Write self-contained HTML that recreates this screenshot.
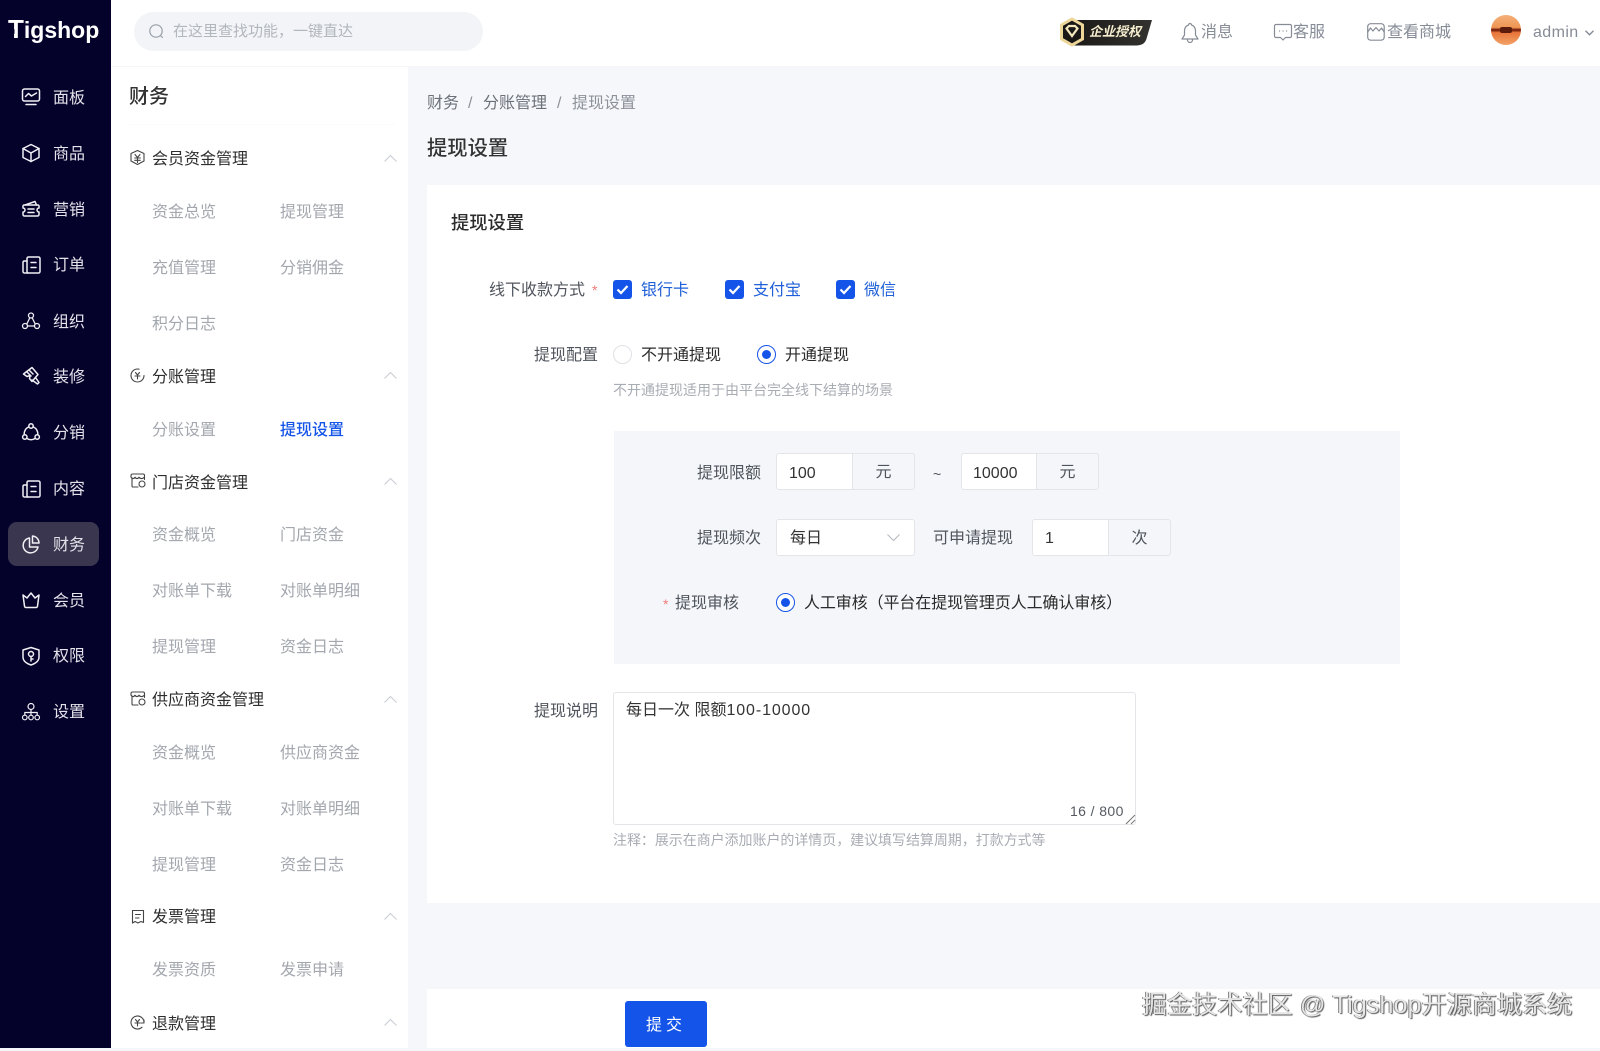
<!DOCTYPE html>
<html lang="zh-CN"><head><meta charset="utf-8"><title>提现设置</title>
<style>
*{box-sizing:border-box}
html,body{margin:0;padding:0;width:1600px;height:1048px;overflow:hidden;background:#f5f7fa;font-family:"Liberation Sans","Noto Sans CJK SC",sans-serif;font-size:16px;color:#333}
.a{position:absolute}
.t{position:absolute;white-space:nowrap;line-height:24px;height:24px;margin-top:1px}
.nav{color:#e4e3ea;left:53px;margin-top:2px}
.h{left:152px;color:#2e2e2e;margin-top:2px}
.i{color:#a3a7ae;margin-top:2px}
.l{color:#50555d}
.b{color:#1f5fd8}
.g{color:#868c96}
svg{position:absolute;overflow:visible;fill:none}
.si{stroke:#f0f0f4;stroke-width:1.5;stroke-linecap:round;stroke-linejoin:round}
.mi{stroke:#444;stroke-width:1.1;stroke-linecap:round;stroke-linejoin:round}
.chev{stroke:#c9ccd2;stroke-width:1}
.tp{stroke:#868c96;stroke-width:1.2;stroke-linecap:round;stroke-linejoin:round}
.cb{position:absolute;width:19px;height:19px;background:#1554e8;border-radius:3px;top:280px}
.rd{position:absolute;width:19px;height:19px;border-radius:50%;background:#fff;border:1px solid #1554e8}
.rd:after{content:"";position:absolute;left:4px;top:4px;width:9px;height:9px;border-radius:50%;background:#1554e8}
.box{position:absolute;background:#fff;border:1px solid #e3e5e9;border-radius:3px}
.add{position:absolute;background:#f4f6fa;border:1px solid #e3e5e9;border-radius:0 3px 3px 0;text-align:center;line-height:37px;color:#50555d}
</style></head><body>

<!-- top bar -->
<div class="a" style="left:0;top:0;width:1600px;height:67px;background:#fff;border-bottom:1px solid #f4f6f9"></div>

<!-- sidebar -->
<div class="a" style="left:0;top:0;width:111px;height:1048px;background:#04012b"></div>
<div class="t" style="left:8px;top:16px;margin:0;font-size:23px;line-height:28px;height:28px;font-weight:700;color:#fff"><span style="font-size:26px;line-height:0">T</span>igshop</div>
<svg style="left:0;top:0" width="111" height="66"><path d="M8 26.500H12L14.500 29.500L14.500 34Z" fill="#04012b"/></svg>
<div class="a" style="left:8px;top:522px;width:91px;height:44px;background:#3a3650;border-radius:9px"></div>

<svg class="si" style="left:21px;top:87px" width="20" height="20"><rect x="1.5" y="2" width="17" height="12" rx="2"/><path d="M4.500 9.500L7.500 6.500L10.500 9L15.500 6M5 17.500H15"/></svg>
<svg class="si" style="left:21px;top:143px" width="20" height="20"><path d="M10 1.500L18 5.500V14.500L10 18.500L2 14.500V5.500Z"/><path d="M2 5.500L10 10L18 5.500M10 10V18.500"/></svg>
<svg class="si" style="left:21px;top:199px" width="20" height="20"><path d="M4 6L14 2.500L15.500 6"/><path d="M3 6H17A1.500 1.500 0 0 1 18 8V9A2 2 0 0 0 18 13V15.500A1.500 1.500 0 0 1 16.500 17H3.500A1.500 1.500 0 0 1 2 15.500V13A2 2 0 0 0 2 9V8A1.500 1.500 0 0 1 3 6Z"/><path d="M7 10H13M7 13.500H13"/></svg>
<svg class="si" style="left:21px;top:255px" width="20" height="20"><rect x="6" y="2" width="13" height="16" rx="1.500"/><path d="M6 6H3A1.500 1.500 0 0 0 2 7.500V16.500A1.500 1.500 0 0 0 3.500 18H7M10 7.500H15M10 12.500H15"/></svg>
<svg class="si" style="left:21px;top:311px;stroke-width:1.3" width="20" height="20"><circle cx="10" cy="4.500" r="2.500"/><circle cx="4" cy="15" r="2.500"/><circle cx="16" cy="15" r="2.500"/><path d="M8.700 7L6 12.600M11.300 7L14 12.600M6.500 15H13.500"/></svg>
<svg class="si" style="left:21px;top:366px" width="20" height="20"><path d="M11 1.500L2.500 8L6 10.500L9 9.500L8.500 12.500L11 15.500L17 8.500Z"/><path d="M5.500 5.500L10 10M8 4L12 8M14.500 11.500L18 16.500L16.500 18L11 14"/></svg>
<svg class="si" style="left:21px;top:422px" width="20" height="20"><path d="M7.500 5A7.500 7.500 0 0 0 3.200 12.500M12.500 5A7.500 7.500 0 0 1 16.800 12.500M6 16.500A7.500 7.500 0 0 0 14 16.500"/><circle cx="10" cy="4" r="2.200"/><circle cx="3.800" cy="15" r="2.200"/><circle cx="16.200" cy="15" r="2.200"/></svg>
<svg class="si" style="left:21px;top:479px" width="20" height="20"><rect x="6" y="2" width="13" height="16" rx="1.500"/><path d="M6 6H3A1.500 1.500 0 0 0 2 7.500V16.500A1.500 1.500 0 0 0 3.500 18H7M10 7.500H15M10 12.500H15"/></svg>
<svg class="si" style="left:21px;top:534px" width="20" height="20"><path d="M8.500 4A7.500 7.500 0 1 0 17 13H8.500Z"/><path d="M11.500 2A7 7 0 0 1 18 9H11.500Z"/></svg>
<svg class="si" style="left:21px;top:590px" width="20" height="20"><path d="M2 5L6 8L10 3L14 8L18 5L16.500 16A1.500 1.500 0 0 1 15 17.500H5A1.500 1.500 0 0 1 3.500 16Z"/></svg>
<svg class="si" style="left:21px;top:646px" width="20" height="20"><path d="M10 1.500L18 4V11C18 15 14.500 17.500 10 19C5.500 17.500 2 15 2 11V4Z"/><circle cx="10" cy="8" r="2.500"/><path d="M10 10.500V15M10 13H12"/></svg>
<svg class="si" style="left:21px;top:702px;stroke-width:1.2" width="20" height="20"><circle cx="10" cy="4.500" r="3"/><circle cx="3.800" cy="15.500" r="2.300"/><circle cx="10" cy="15.500" r="2.300"/><circle cx="16.200" cy="15.500" r="2.300"/><path d="M10 7.500V13M3.800 13V10.500H16.200V13"/></svg>

<div class="t nav" style="top:85px">面板</div>
<div class="t nav" style="top:141px">商品</div>
<div class="t nav" style="top:197px">营销</div>
<div class="t nav" style="top:252px">订单</div>
<div class="t nav" style="top:309px">组织</div>
<div class="t nav" style="top:364px">装修</div>
<div class="t nav" style="top:420px">分销</div>
<div class="t nav" style="top:476px">内容</div>
<div class="t nav" style="top:532px">财务</div>
<div class="t nav" style="top:588px">会员</div>
<div class="t nav" style="top:643px">权限</div>
<div class="t nav" style="top:699px">设置</div>

<!-- submenu panel -->
<div class="a" style="left:111px;top:67px;width:297px;height:981px;background:#fff"></div>
<div class="t" style="left:129px;top:84px;font-size:20px;font-weight:500;color:#333">财务</div>
<div class="a" style="left:129px;top:124px;width:266px;height:1px;background:#fafbfc"></div>

<svg class="mi" style="left:130px;top:150px" width="15" height="15"><path d="M7.500 .5L14 3.500V11L7.500 14.500L1 11V3.500Z"/><path d="M5 4.500L7.500 7.500L10 4.500M4.700 8H10.300M4.700 10.300H10.300M7.500 7.500V12.500"/></svg>
<svg class="mi" style="left:130px;top:368px" width="15" height="15"><circle cx="7.500" cy="7.500" r="6.500" stroke-dasharray="32 9"/><path d="M5.500 4.500L7.500 7L9.500 4.500M5 8H10M7.500 7V11"/></svg>
<svg class="mi" style="left:130px;top:473px" width="16" height="15"><path d="M1 4V2.500A1.500 1.500 0 0 1 2.500 1H13A1.500 1.500 0 0 1 14.500 2.500V6.500M2 5V13A1 1 0 0 0 3 14H8"/><path d="M1 4C2 6 4 6 5 4.200C6 6 8 6 9 4.200C10 6 13 6 14.500 4"/><circle cx="12" cy="11" r="3"/></svg>
<svg class="mi" style="left:130px;top:691px" width="16" height="15"><path d="M1 4V2.500A1.500 1.500 0 0 1 2.500 1H13A1.500 1.500 0 0 1 14.500 2.500V6.500M2 5V13A1 1 0 0 0 3 14H8"/><path d="M1 4C2 6 4 6 5 4.200C6 6 8 6 9 4.200C10 6 13 6 14.500 4"/><circle cx="12" cy="11" r="3"/></svg>
<svg class="mi" style="left:131px;top:909px" width="14" height="15"><path d="M1.500 14V1.500H12.500V13.500L10 12.500L7 14L4 12.500Z"/><path d="M4.500 5.500H9.500M4.500 9H8"/></svg>
<svg class="mi" style="left:130px;top:1015px" width="15" height="15"><path d="M14 7.500A6.500 6.500 0 1 0 12 12.200M14 5V8H11"/><path d="M5.500 4.500L7.500 7L9.500 4.500M5 8H10M7.500 7V11"/></svg>

<div class="t h" style="top:146px">会员资金管理</div>
<div class="t h" style="top:364px">分账管理</div>
<div class="t h" style="top:470px">门店资金管理</div>
<div class="t h" style="top:687px">供应商资金管理</div>
<div class="t h" style="top:904px">发票管理</div>
<div class="t h" style="top:1011px">退款管理</div>

<svg class="chev" style="left:384px;top:155px" width="13" height="7"><path d="M.5 6.500L6.500 .5L12.500 6.500"/></svg>
<svg class="chev" style="left:384px;top:372px" width="13" height="7"><path d="M.5 6.500L6.500 .5L12.500 6.500"/></svg>
<svg class="chev" style="left:384px;top:478px" width="13" height="7"><path d="M.5 6.500L6.500 .5L12.500 6.500"/></svg>
<svg class="chev" style="left:384px;top:696px" width="13" height="7"><path d="M.5 6.500L6.500 .5L12.500 6.500"/></svg>
<svg class="chev" style="left:384px;top:913px" width="13" height="7"><path d="M.5 6.500L6.500 .5L12.500 6.500"/></svg>
<svg class="chev" style="left:384px;top:1019px" width="13" height="7"><path d="M.5 6.500L6.500 .5L12.500 6.500"/></svg>

<div class="t i" style="left:152px;top:199px">资金总览</div><div class="t i" style="left:280px;top:199px">提现管理</div>
<div class="t i" style="left:152px;top:255px">充值管理</div><div class="t i" style="left:280px;top:255px">分销佣金</div>
<div class="t i" style="left:152px;top:311px">积分日志</div>
<div class="t i" style="left:152px;top:417px">分账设置</div><div class="t" style="left:280px;top:417px;margin-top:2px;color:#1554e8;font-weight:500">提现设置</div>
<div class="t i" style="left:152px;top:522px">资金概览</div><div class="t i" style="left:280px;top:522px">门店资金</div>
<div class="t i" style="left:152px;top:578px">对账单下载</div><div class="t i" style="left:280px;top:578px">对账单明细</div>
<div class="t i" style="left:152px;top:634px">提现管理</div><div class="t i" style="left:280px;top:634px">资金日志</div>
<div class="t i" style="left:152px;top:740px">资金概览</div><div class="t i" style="left:280px;top:740px">供应商资金</div>
<div class="t i" style="left:152px;top:796px">对账单下载</div><div class="t i" style="left:280px;top:796px">对账单明细</div>
<div class="t i" style="left:152px;top:852px">提现管理</div><div class="t i" style="left:280px;top:852px">资金日志</div>
<div class="t i" style="left:152px;top:957px">发票资质</div><div class="t i" style="left:280px;top:957px">发票申请</div>

<!-- header contents -->
<div class="a" style="left:134px;top:12px;width:349px;height:39px;border-radius:20px;background:#f2f4f8"></div>
<svg style="left:149px;top:24px;stroke:#9aa0a9;stroke-width:1.2;stroke-linecap:round" width="15" height="15"><circle cx="7" cy="7" r="6.200"/><path d="M11.500 11.500L13.500 13.500"/></svg>
<div class="t" style="left:173px;top:19px;font-size:15px;color:#b2b6bd">在这里查找功能，一键直达</div>

<svg style="left:1060px;top:17px" width="94" height="31"><defs><linearGradient id="bg" x1="0" y1="0" x2="1" y2="0"><stop offset="0" stop-color="#1c1a18"/><stop offset="1" stop-color="#34322f"/></linearGradient></defs><path d="M14 3H92L87 20C85.500 26 83 28.500 75 28.500H14Z" fill="url(#bg)"/><path d="M12 2L22.500 8V22L12 28L1.500 22V8Z" fill="#1a1816" stroke="#ecd699" stroke-width="3"/><path d="M6.500 11.500L9 9H15L17.500 11.500L12 19Z" stroke="#f4e6bd" stroke-width="2.200"/></svg>
<div class="t" style="left:1089px;top:19px;font-size:13px;font-weight:700;font-style:italic;color:#f5edcf">企业授权</div>

<svg class="tp" style="left:1181px;top:22px" width="18" height="21"><path d="M9 1.500A1.500 1.500 0 0 1 10.500 3C13 3.800 14.500 6 14.500 9V13L17 17H1L3.500 13V9C3.500 6 5 3.800 7.500 3A1.500 1.500 0 0 1 9 1.500Z"/><path d="M6.500 18A2.500 2.500 0 0 0 11.500 18"/></svg>
<div class="t g" style="left:1201px;top:20px">消息</div>
<svg class="tp" style="left:1274px;top:23px" width="18" height="18"><path d="M2 1.500H16A1.500 1.500 0 0 1 17.500 3V13A1.500 1.500 0 0 1 16 14.500H11.500L9 17L6.500 14.500H2A1.500 1.500 0 0 1 .5 13V3A1.500 1.500 0 0 1 2 1.500Z"/><path d="M5.500 8H5.600M9 8H9.100M12.500 8H12.600"/></svg>
<div class="t g" style="left:1293px;top:20px">客服</div>
<svg class="tp" style="left:1367px;top:23px" width="18" height="18"><rect x=".7" y=".7" width="16.500" height="16.500" rx="3"/><path d="M.7 9L3.500 5L6 8L9 4.500L12 8L14.500 5L17.200 9"/></svg>
<div class="t g" style="left:1387px;top:20px">查看商城</div>
<div class="a" style="left:1491px;top:15px;width:30px;height:30px;border-radius:50%;background:linear-gradient(#f4b07a 0%,#ef9552 42%,#7c2410 48%,#7c2410 52%,#e8743a 58%,#f2a468 100%)"></div>
<div class="a" style="left:1500px;top:27px;width:12px;height:6px;background:#5a1a0c;border-radius:2px"></div>
<div class="t g" style="left:1533px;top:20px;letter-spacing:.4px">admin</div>
<svg style="left:1585px;top:30px;stroke:#868c96;stroke-width:1.4" width="9" height="6"><path d="M.5 .8L4.500 4.800L8.500 .8"/></svg>

<!-- breadcrumb -->
<div class="t l" style="left:427px;top:91px;color:#6c7179">财务</div>
<div class="t" style="left:468px;top:91px;color:#8d9199">/</div>
<div class="t l" style="left:483px;top:91px;color:#6c7179">分账管理</div>
<div class="t" style="left:557px;top:91px;color:#8d9199">/</div>
<div class="t" style="left:572px;top:91px;color:#8d9199">提现设置</div>
<div class="t" style="left:427px;top:136px;font-size:20.300px;font-weight:500;color:#333">提现设置</div>

<!-- card -->
<div class="a" style="left:427px;top:185px;width:1173px;height:718px;background:#fff"></div>
<div class="t" style="left:451px;top:210px;font-size:18.300px;font-weight:500;color:#2b2b2b">提现设置</div>

<div class="t l" style="left:489px;top:278px">线下收款方式</div>
<div class="t" style="left:592px;top:277px;color:#f07a7a;font-size:14px">*</div>
<div class="cb" style="left:613px"></div><svg style="left:613px;top:280px;stroke:#fff;stroke-width:2.200" width="19" height="19"><path d="M4.500 9.500L8 13L14.500 6"/></svg><div class="t b" style="left:641px;top:278px">银行卡</div>
<div class="cb" style="left:725px"></div><svg style="left:725px;top:280px;stroke:#fff;stroke-width:2.200" width="19" height="19"><path d="M4.500 9.500L8 13L14.500 6"/></svg><div class="t b" style="left:753px;top:278px">支付宝</div>
<div class="cb" style="left:836px"></div><svg style="left:836px;top:280px;stroke:#fff;stroke-width:2.200" width="19" height="19"><path d="M4.500 9.500L8 13L14.500 6"/></svg><div class="t b" style="left:864px;top:278px">微信</div>

<div class="t l" style="left:534px;top:343px">提现配置</div>
<div class="a" style="left:613px;top:345px;width:19px;height:19px;border-radius:50%;border:1px solid #dfe1e5;background:#fff"></div>
<div class="t" style="left:641px;top:343px;color:#2b2b2b">不开通提现</div>
<div class="rd" style="left:757px;top:345px"></div>
<div class="t" style="left:785px;top:343px;color:#2b2b2b">开通提现</div>
<div class="t" style="left:613px;top:377px;font-size:14px;color:#a8acb3">不开通提现适用于由平台完全线下结算的场景</div>

<!-- gray panel -->
<div class="a" style="left:614px;top:431px;width:786px;height:233px;background:#f4f6fa"></div>

<div class="t l" style="left:697px;top:461px">提现限额</div>
<div class="box" style="left:776px;top:453px;width:77px;height:37px;border-radius:3px 0 0 3px"></div><div class="add" style="left:852px;top:453px;width:63px;height:37px">元</div>
<div class="t" style="left:789px;top:461px;color:#333">100</div>
<div class="t l" style="left:933px;top:461px;font-size:14px">~</div>
<div class="box" style="left:961px;top:453px;width:76px;height:37px;border-radius:3px 0 0 3px"></div><div class="add" style="left:1036px;top:453px;width:63px;height:37px">元</div>
<div class="t" style="left:973px;top:461px;color:#333">10000</div>

<div class="t l" style="left:697px;top:526px">提现频次</div>
<div class="box" style="left:776px;top:519px;width:139px;height:37px"></div>
<div class="t" style="left:790px;top:526px;color:#333">每日</div>
<svg style="left:887px;top:534px;stroke:#b5b9c0;stroke-width:1.100" width="13" height="8"><path d="M.5 .5L6.500 6.500L12.500 .5"/></svg>
<div class="t l" style="left:933px;top:526px">可申请提现</div>
<div class="box" style="left:1032px;top:519px;width:77px;height:37px;border-radius:3px 0 0 3px"></div><div class="add" style="left:1108px;top:519px;width:63px;height:37px">次</div>
<div class="t" style="left:1045px;top:526px;color:#333">1</div>

<div class="t" style="left:663px;top:591px;color:#f07a7a;font-size:14px">*</div>
<div class="t l" style="left:675px;top:591px">提现审核</div>
<div class="rd" style="left:776px;top:593px"></div>
<div class="t" style="left:804px;top:591px;color:#2b2b2b;letter-spacing:-.1px">人工审核（平台在提现管理页人工确认审核）</div>

<!-- textarea -->
<div class="t l" style="left:534px;top:699px">提现说明</div>
<div class="box" style="left:613px;top:692px;width:523px;height:133px;border-width:1.500px"></div>
<div class="t" style="left:626px;top:698px;color:#333">每日一次 限额<span style="letter-spacing:.9px">100-10000</span></div>
<div class="t" style="left:1070px;top:798px;font-size:14px;letter-spacing:.4px;color:#555a62">16 / 800</div>
<svg style="left:1125px;top:814px;stroke:#777;stroke-width:1" width="10" height="10"><path d="M1 10L10 1M6 10L10 6"/></svg>
<div class="t" style="left:613px;top:827px;font-size:14px;letter-spacing:-.05px;color:#a8acb3">注释：展示在商户添加账户的详情页，建议填写结算周期，打款方式等</div>

<!-- bottom bar -->
<div class="a" style="left:427px;top:989px;width:1173px;height:59px;background:#fff"></div>
<div class="a" style="left:625px;top:1001px;width:82px;height:46px;background:#1554e8;border-radius:3px;color:#fff;text-align:center;line-height:50px;letter-spacing:4px">提交</div>
<div class="t" style="left:1142px;top:989px;height:30px;line-height:30px;font-size:25px;letter-spacing:.15px;color:#e6e6e6;text-shadow:1px 1px 1px #555,-1px 0 0 #888">掘金技术社区 @ Tigshop开源商城系统</div>
</body></html>
